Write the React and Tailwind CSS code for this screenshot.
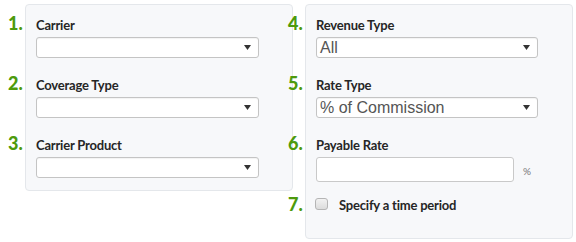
import React from "react";

const Arrow = () => (
  <svg width="7" height="5" viewBox="0 0 7 5" className="shrink-0">
    <path d="M0 0 H7 L3.5 5 Z" fill="#333" />
  </svg>
);

const Num = ({ n }) => (
  <span
    className="-ml-[28px] w-[28px] shrink-0 text-[18px] leading-[11px] font-black text-[#4d9a0c]"
    style={{ fontFamily: "Lato, 'Open Sans', sans-serif" }}
  >
    {n}.
  </span>
);

const Label = ({ n, children, mt = "" }) => (
  <div className={`flex items-baseline h-[15px] ${mt}`}>
    <Num n={n} />
    <span className="text-[13px] leading-[15px] font-bold text-[#262626] tracking-[-0.2px]">
      {children}
    </span>
  </div>
);

const Select = ({ value, w = "w-[223px]" }) => (
  <div
    className={`mt-[4px] h-[21px] ${w} bg-white border border-[#c4c4c4] rounded-[3px] flex items-center justify-between pl-[3px] pr-[7px] shadow-[inset_0_1px_1px_rgba(0,0,0,0.05)]`}
  >
    <span
      className="text-[16px] leading-[19px] text-[#555]"
      style={{ fontFamily: "'Liberation Sans', Arial, sans-serif" }}
    >
      {value}
    </span>
    <Arrow />
  </div>
);

export default function App() {
  return (
    <div
      className="w-[576px] h-[242px] bg-white flex items-start"
      style={{ fontFamily: "Lato, 'Open Sans', sans-serif" }}
    >
      <div className="ml-[25px] mt-[4px] w-[268px] h-[187px] bg-[#f7f8fa] border border-[#e4e7eb] rounded-[4px] pl-[10px] pt-[13px] flex flex-col">
        <Label n={1}>Carrier</Label>
        <Select value="" />
        <Label n={2} mt="mt-[20px]">Coverage Type</Label>
        <Select value="" />
        <Label n={3} mt="mt-[20px]">Carrier Product</Label>
        <Select value="" />
      </div>

      <div className="ml-[12px] mt-[4px] w-[268px] h-[235px] bg-[#f7f8fa] border border-[#e4e7eb] rounded-[4px] pl-[10px] pt-[13px] flex flex-col">
        <Label n={4}>Revenue Type</Label>
        <Select value="All" w="w-[222px]" />
        <Label n={5} mt="mt-[20px]">Rate Type</Label>
        <Select value="% of Commission" w="w-[222px]" />
        <Label n={6} mt="mt-[20px]">Payable Rate</Label>
        <div className="mt-[4px] flex items-center">
          <div className="h-[25px] w-[198px] bg-white border border-[#c9c9c9] rounded-[3px]" />
          <span className="ml-[9px] mt-[4px] text-[10px] text-[#777]">%</span>
        </div>
        <div className="mt-[14px] flex items-center h-[16px]">
          <span
            className="-ml-[28px] w-[27px] shrink-0 text-[18px] leading-[15px] font-black text-[#4d9a0c]"
            style={{ fontFamily: "Lato, 'Open Sans', sans-serif" }}
          >
            7.
          </span>
          <span className="w-[13px] h-[12px] rounded-[3px] border border-[#b5b5b5] bg-gradient-to-b from-[#f2f2f2] to-[#dcdcdc] shrink-0" />
          <span className="ml-[11px] mt-[2px] text-[13px] leading-[15px] font-bold text-[#262626] tracking-[-0.2px]">
            Specify a time period
          </span>
        </div>
      </div>
    </div>
  );
}
